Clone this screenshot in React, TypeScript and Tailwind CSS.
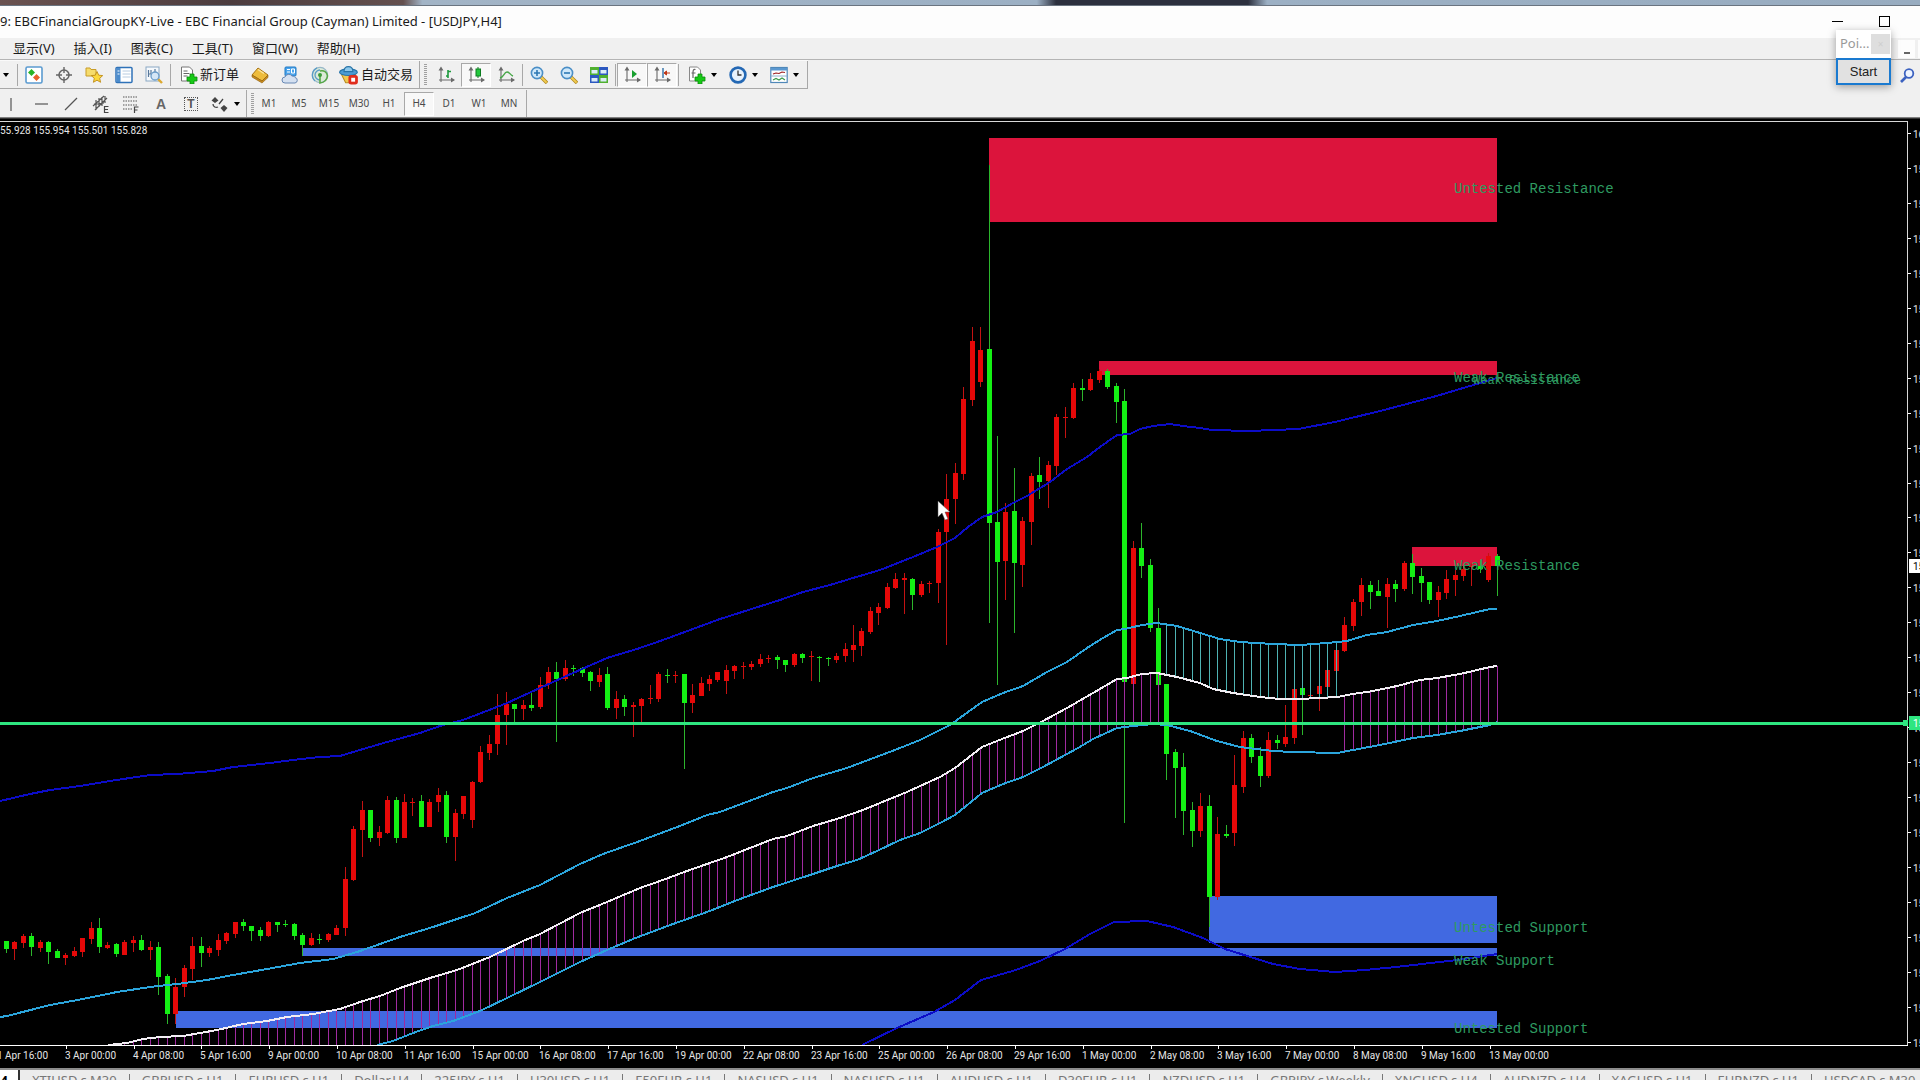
import type { ReactNode } from 'react';
import clsx from 'clsx';

type Point = [number, number];
// direction, high, body top, body bottom, low
type Candle = ['r' | 'g', number, number, number, number];

const STEP = 8.472;
const FIRST_X = 6.3;
const candleX = (i: number) => FIRST_X + (i - 1) * STEP;

const candles: Candle[] = [
  ['r', 940, 940, 964, 964], ['g', 941, 941, 949, 953], ['r', 941, 942, 949, 960], ['r', 934, 936, 943, 948],
  ['g', 933, 936, 947, 956], ['r', 940, 942, 948, 952], ['g', 941, 942, 952, 964], ['g', 949, 951, 958, 958],
  ['r', 953, 955, 958, 965], ['r', 947, 951, 956, 957], ['r', 938, 938, 952, 957], ['r', 922, 928, 939, 944],
  ['g', 918, 928, 947, 953], ['r', 942, 945, 948, 949], ['g', 943, 944, 954, 957], ['r', 940, 942, 955, 955],
  ['r', 936, 940, 943, 952], ['g', 935, 940, 950, 951], ['r', 941, 947, 950, 960], ['g', 942, 947, 977, 995],
  ['g', 974, 976, 1014, 1024], ['r', 978, 987, 1014, 1024], ['r', 965, 968, 987, 997], ['r', 937, 946, 969, 980],
  ['g', 937, 946, 953, 967], ['r', 946, 948, 953, 957], ['r', 934, 940, 950, 956], ['r', 932, 933, 941, 944],
  ['r', 922, 922, 934, 938], ['g', 919, 922, 926, 931], ['g', 926, 926, 931, 941], ['g', 927, 930, 936, 941],
  ['r', 921, 922, 936, 937], ['g', 922, 922, 925, 932], ['g', 920, 924, 925, 927], ['g', 923, 924, 936, 940],
  ['g', 933, 935, 945, 956], ['r', 933, 938, 945, 946], ['g', 934, 939, 940, 944], ['r', 933, 934, 940, 942],
  ['r', 925, 928, 935, 935], ['r', 867, 879, 928, 936], ['r', 826, 829, 880, 881], ['r', 801, 810, 830, 857],
  ['g', 810, 810, 838, 842], ['r', 826, 832, 838, 846], ['r', 796, 800, 833, 834], ['g', 797, 800, 838, 843],
  ['r', 794, 802, 838, 838], ['r', 798, 802, 803, 816], ['g', 795, 801, 827, 827], ['r', 799, 802, 827, 827],
  ['r', 788, 795, 802, 812], ['g', 791, 795, 837, 843], ['r', 809, 813, 837, 861], ['r', 796, 796, 814, 819],
  ['r', 781, 782, 820, 828], ['r', 746, 752, 782, 783], ['r', 735, 744, 753, 760], ['r', 694, 715, 744, 755],
  ['r', 692, 704, 715, 745], ['g', 704, 704, 709, 722], ['r', 700, 705, 709, 720], ['g', 693, 705, 708, 711],
  ['r', 677, 685, 707, 709], ['r', 667, 672, 684, 689], ['g', 662, 672, 679, 742], ['r', 660, 668, 679, 681],
  ['g', 665, 668, 669, 676], ['g', 667, 668, 673, 677], ['g', 671, 672, 681, 691], ['r', 668, 675, 682, 687],
  ['g', 667, 674, 708, 710], ['r', 691, 699, 708, 719], ['g', 695, 699, 707, 716], ['r', 702, 705, 707, 737],
  ['r', 698, 699, 706, 722], ['r', 685, 698, 699, 704], ['r', 672, 674, 699, 702], ['g', 669, 675, 676, 683],
  ['r', 671, 675, 676, 683], ['g', 674, 674, 703, 769], ['r', 684, 695, 703, 713], ['r', 677, 683, 696, 696],
  ['r', 675, 679, 684, 691], ['r', 672, 672, 680, 682], ['r', 665, 670, 681, 694], ['r', 665, 666, 671, 679],
  ['r', 662, 666, 667, 679], ['r', 661, 664, 667, 670], ['r', 654, 659, 664, 667], ['r', 655, 658, 659, 663],
  ['g', 655, 657, 660, 669], ['g', 660, 660, 665, 672], ['r', 653, 654, 665, 667], ['g', 653, 654, 658, 663],
  ['r', 651, 656, 657, 681], ['g', 656, 657, 658, 682], ['g', 657, 658, 659, 666], ['r', 653, 656, 660, 663],
  ['r', 643, 649, 656, 662], ['r', 625, 645, 650, 662], ['r', 628, 631, 646, 656], ['r', 607, 611, 632, 634],
  ['r', 603, 607, 613, 625], ['r', 583, 587, 608, 609], ['r', 573, 579, 588, 589], ['r', 573, 578, 580, 614],
  ['g', 578, 579, 595, 610], ['r', 581, 584, 595, 597], ['r', 581, 583, 584, 593], ['r', 529, 532, 583, 603],
  ['r', 474, 499, 532, 645], ['r', 463, 473, 499, 524], ['r', 387, 399, 474, 480], ['r', 327, 341, 400, 406],
  ['r', 327, 350, 382, 387], ['g', 165, 349, 523, 623], ['g', 436, 522, 562, 685], ['r', 503, 512, 561, 600],
  ['g', 468, 511, 563, 633], ['r', 517, 521, 565, 587], ['r', 473, 476, 522, 545], ['g', 457, 475, 482, 499],
  ['r', 461, 465, 481, 508], ['r', 414, 417, 466, 475], ['r', 407, 417, 418, 438], ['r', 383, 388, 418, 419],
  ['g', 379, 388, 390, 401], ['r', 373, 379, 390, 391], ['r', 369, 371, 380, 383], ['g', 369, 371, 387, 389],
  ['g', 383, 386, 402, 423], ['g', 389, 401, 682, 823], ['r', 541, 548, 684, 684], ['g', 523, 548, 566, 578],
  ['g', 559, 565, 628, 632], ['g', 608, 628, 685, 685], ['g', 684, 684, 754, 780], ['g', 749, 752, 768, 818],
  ['g', 753, 767, 811, 835], ['g', 802, 810, 831, 847], ['r', 793, 806, 831, 837], ['g', 795, 806, 897, 927],
  ['r', 817, 834, 897, 900], ['g', 825, 834, 836, 838], ['r', 755, 785, 833, 846], ['r', 731, 738, 787, 793],
  ['g', 734, 738, 757, 763], ['g', 747, 756, 776, 787], ['r', 732, 740, 776, 778], ['g', 735, 740, 743, 749],
  ['r', 705, 737, 744, 747], ['r', 688, 689, 738, 744], ['g', 687, 688, 695, 735], ['r', 690, 695, 696, 697],
  ['r', 683, 686, 694, 711], ['r', 669, 670, 687, 688], ['r', 650, 650, 671, 671], ['r', 617, 625, 651, 652],
  ['r', 599, 602, 626, 631], ['r', 578, 585, 602, 616], ['g', 581, 585, 592, 609], ['g', 580, 591, 596, 596],
  ['r', 578, 584, 597, 628], ['g', 580, 584, 589, 602], ['r', 561, 563, 589, 591], ['g', 554, 563, 577, 594],
  ['g', 568, 576, 583, 602], ['g', 582, 582, 600, 604], ['r', 586, 592, 600, 617], ['r', 570, 579, 593, 599],
  ['r', 570, 575, 580, 596], ['r', 565, 569, 576, 581], ['r', 563, 566, 567, 586], ['g', 560, 566, 569, 573],
  ['r', 553, 556, 580, 582], ['g', 554, 556, 566, 596],
];

const outerUpper: Point[] = [
  [0, 801], [30, 794], [50, 790], [80, 786], [110, 781], [150, 775], [177, 774], [213, 771], [233, 767], [270, 763],
  [293, 760], [320, 757], [340, 756], [353, 752], [387, 742], [420, 733], [443, 725], [463, 720], [497, 707],
  [507, 703], [540, 688], [573, 673], [607, 658], [637, 649], [663, 640], [720, 619], [780, 600], [803, 592],
  [830, 585], [853, 578], [880, 570], [913, 557], [937, 547], [955, 538], [968, 527], [982, 517], [997, 512],
  [1013, 503], [1027, 496], [1050, 482], [1067, 469], [1087, 457], [1100, 447], [1117, 435], [1130, 434],
  [1140, 429], [1153, 426], [1170, 424], [1183, 426], [1200, 428], [1212, 430], [1249, 431], [1298, 429],
  [1335, 422], [1384, 410], [1433, 397], [1497, 378],
];

const innerUpper: Point[] = [
  [0, 1017], [7, 1016], [50, 1005], [83, 999], [117, 992], [150, 987], [177, 984], [207, 980], [233, 975],
  [267, 969], [300, 963], [333, 959], [347, 955], [360, 951], [400, 937], [433, 927], [463, 917], [473, 914],
  [507, 898], [540, 885], [580, 864], [603, 854], [640, 841], [680, 826], [707, 815], [720, 812], [773, 792],
  [787, 788], [813, 778], [847, 768], [900, 748], [920, 740], [950, 725], [982, 702], [1003, 693], [1023, 686],
  [1047, 672], [1067, 662], [1087, 648], [1103, 638], [1117, 630], [1125, 629], [1142, 625], [1157, 623],
  [1177, 626], [1200, 633], [1220, 639], [1240, 642], [1273, 644], [1300, 645], [1327, 643], [1347, 641],
  [1367, 635], [1387, 632], [1413, 625], [1437, 621], [1460, 616], [1490, 609], [1497, 609],
];

const middle: Point[] = [
  [108, 1045], [127, 1043], [143, 1039], [160, 1037], [183, 1036], [200, 1033], [217, 1030], [243, 1024],
  [267, 1021], [287, 1017], [313, 1014], [340, 1009], [360, 1002], [380, 996], [400, 988], [430, 978], [457, 970],
  [490, 957], [523, 941], [540, 934], [580, 913], [607, 902], [640, 888], [660, 881], [687, 871], [727, 857],
  [773, 839], [787, 836], [813, 826], [840, 818], [863, 810], [880, 803], [907, 792], [940, 777], [955, 768],
  [982, 747], [1002, 739], [1023, 731], [1043, 721], [1067, 708], [1093, 693], [1117, 679], [1127, 678],
  [1142, 674], [1157, 673], [1167, 675], [1177, 677], [1200, 683], [1213, 689], [1233, 693], [1260, 697],
  [1280, 699], [1300, 699], [1337, 697], [1353, 694], [1373, 691], [1397, 686], [1420, 680], [1437, 678],
  [1460, 674], [1490, 667], [1497, 666],
];

const innerLower: Point[] = [
  [377, 1045], [393, 1041], [413, 1033], [433, 1026], [453, 1021], [480, 1011], [507, 998], [540, 982], [580, 962],
  [607, 950], [633, 939], [673, 924], [707, 912], [740, 899], [773, 887], [807, 876], [840, 865], [857, 860],
  [877, 851], [900, 840], [920, 833], [940, 823], [955, 815], [982, 793], [1003, 784], [1023, 777], [1043, 767],
  [1078, 748], [1093, 739], [1117, 728], [1133, 726], [1153, 724], [1167, 725], [1190, 731], [1217, 741],
  [1240, 747], [1273, 751], [1293, 752], [1337, 753], [1353, 750], [1380, 745], [1413, 738], [1437, 735],
  [1460, 731], [1490, 725], [1497, 722],
];

const outerLower: Point[] = [
  [862, 1045], [897, 1028], [934, 1012], [955, 1000], [981, 980], [1016, 970], [1040, 961], [1065, 949], [1090, 934],
  [1114, 922], [1147, 921], [1173, 927], [1203, 938], [1225, 949], [1273, 964], [1300, 969], [1335, 972],
  [1365, 970], [1396, 967], [1457, 960], [1497, 954],
];

const zones = [
  { x: 989, y: 138, h: 84, fill: '#dc143c' },
  { x: 1099, y: 361, h: 14, fill: '#dc143c' },
  { x: 1412, y: 547, h: 19, fill: '#dc143c' },
  { x: 1209, y: 896, h: 47, fill: '#4169e1' },
  { x: 303, y: 948, h: 8, fill: '#4169e1' },
  { x: 176, y: 1011, h: 17, fill: '#4169e1' },
];

const zoneLabels = [
  { x: 1454, y: 193, size: 14, text: 'Untested Resistance' },
  { x: 1454, y: 382, size: 14, text: 'Weak Resistance' },
  { x: 1473, y: 384, size: 12, text: 'Weak Resistance' },
  { x: 1454, y: 570, size: 14, text: 'Weak Resistance' },
  { x: 1454, y: 932, size: 14, text: 'Untested Support' },
  { x: 1454, y: 965, size: 14, text: 'Weak Support' },
  { x: 1454, y: 1033, size: 14, text: 'Untested Support' },
];

const dates = [
  '1 Apr 16:00', '3 Apr 00:00', '4 Apr 08:00', '5 Apr 16:00', '9 Apr 00:00', '10 Apr 08:00', '11 Apr 16:00',
  '15 Apr 00:00', '16 Apr 08:00', '17 Apr 16:00', '19 Apr 00:00', '22 Apr 08:00', '23 Apr 16:00', '25 Apr 00:00',
  '26 Apr 08:00', '29 Apr 16:00', '1 May 00:00', '2 May 08:00', '3 May 16:00', '7 May 00:00', '8 May 08:00',
  '9 May 16:00', '13 May 00:00',
];

const menus = ['显示(V)', '插入(I)', '图表(C)', '工具(T)', '窗口(W)', '帮助(H)'];
const periods = ['M1', 'M5', 'M15', 'M30', 'H1', 'H4', 'D1', 'W1', 'MN'];
const chartTabs = [
  'XTIUSD.c,M30', 'GBPUSD.c,H1', 'EURUSD.c,H1', 'Dollar,H4', '225JPY.c,H1', 'U30USD.c,H1', 'E50EUR.c,H1',
  'NASUSD.c,H1', 'NASUSD.c,H1', 'AUDUSD.c,H1', 'D30EUR.c,H1', 'NZDUSD.c,H1', 'GBPJPY.c,Weekly', 'XNGUSD.c,H4',
  'AUDNZD.c,H4', 'XAGUSD.c,H1', 'EURNZD.c,H1', 'USDCAD.c,M30',
];

const toPath = (pts: Point[]) => pts.map((p) => p.join(',')).join(' ');

function valueAt(pts: Point[], x: number, fallback: number) {
  if (x < pts[0][0]) return fallback;
  for (let i = 1; i < pts.length; i++) {
    const [x0, y0] = pts[i - 1];
    const [x1, y1] = pts[i];
    if (x <= x1) return y0 + ((y1 - y0) * (x - x0)) / (x1 - x0);
  }
  return pts[pts.length - 1][1];
}

function Chart() {
  return (
    <svg viewBox="0 117 1920 951" className="block w-full h-auto bg-black" role="img" aria-label="USDJPY,H4">
      <g shapeRendering="crispEdges">
        <rect x="0" y="117" width="1920" height="1" fill="#808080" />
        <rect x="0" y="118" width="1920" height="1" fill="#333" />
        {zones.map((z) => (
          <rect key={z.y} x={z.x} y={z.y} width={1497 - z.x} height={z.h} fill={z.fill} />
        ))}
        {candles.map(([dir, high, top, bottom, low], i) => {
          const x = Math.round(candleX(i) - 0.5);
          return (
            <g key={i}>
              <rect x={x} y={high} width="1" height={Math.max(low - high, 1)} fill={dir === 'r' ? '#c41212' : '#2cb52c'} />
              <rect x={x - 2} y={top} width="5" height={Math.max(bottom - top, 1)} fill={dir === 'r' ? '#e60808' : '#14f014'} />
            </g>
          );
        })}
        {candles.map((_, i) => {
          const x = candleX(i);
          if (x < 120) return null;
          const bearish = i >= 138 && i <= 158;
          const mid = valueAt(middle, x, 1045);
          const y1 = bearish ? valueAt(innerUpper, x, 1045) : mid;
          const y2 = bearish ? mid : valueAt(innerLower, x, 1045);
          return (
            <rect key={i} x={Math.round(x - 0.5)} y={y1} width="1" height={y2 - y1} fill={bearish ? '#4fb3b3' : '#a02ba0'} />
          );
        })}
      </g>

      <g fill="none" strokeWidth="2" strokeLinejoin="round" shapeRendering="crispEdges">
        <polyline points={toPath(outerUpper)} stroke="#0c0cc8" />
        <polyline points={toPath(outerLower)} stroke="#0c0cc8" />
        <polyline points={toPath(innerUpper)} stroke="#2ba5dc" />
        <polyline points={toPath(innerLower)} stroke="#2ba5dc" />
        <polyline points={toPath(middle)} stroke="#f2eef4" />
      </g>

      <g shapeRendering="crispEdges">
        <rect x="0" y="722" width="1907" height="3" fill="#2ee680" />
        <rect x="0" y="121" width="1908" height="1" fill="#d8d8d8" />
        <rect x="1907" y="121" width="1" height="925" fill="#d8d8d8" />
        <rect x="0" y="1045" width="1908" height="1" fill="#ffffff" />
        {dates.map((d, i) => (
          <rect key={d} x={Math.round(-2 + i * 67.8)} y="1046" width="1" height="3" fill="#ffffff" />
        ))}
        {Array.from({ length: 27 }, (_, i) => (
          <rect key={i} x="1908" y={Math.round(133 + i * 34.95)} width="3" height="1" fill="#ffffff" />
        ))}
      </g>

      <g fill="#2e9b60" className="font-['Liberation_Mono',monospace]">
        {zoneLabels.map((l) => (
          <text key={l.y} x={l.x} y={l.y} fontSize={l.size}>{l.text}</text>
        ))}
      </g>

      <g fill="#e6e6e6" fontSize="10" className="font-[Roboto,sans-serif]">
        <text x="0" y="134">55.928 155.954 155.501 155.828</text>
        {dates.map((d, i) => (
          <text key={d} x={Math.round(-3 + i * 67.8)} y="1059">{d}</text>
        ))}
        {Array.from({ length: 27 }, (_, i) => (
          <text key={i} x="1913" y={Math.round(138 + i * 34.95)}>{i === 0 ? '16' : '15'}</text>
        ))}
        <rect x="1909" y="559" width="11" height="14" fill="#ffffff" />
        <text x="1913" y="570" fill="#000000">15</text>
        <rect x="1903" y="720" width="5" height="6" fill="#2ee680" />
        <rect x="1909" y="716" width="11" height="14" fill="#2ee680" />
        <text x="1913" y="727" fill="#ffffff">15</text>
      </g>

      <path d="M938 501v16l4-4 3 7 3-1-3-7h5z" fill="#ffffff" stroke="#555" strokeWidth="0.5" />
    </svg>
  );
}

function Icon({ children, size = 18 }: { children: ReactNode; size?: number }) {
  return (
    <svg width={size} height={size} viewBox="0 0 18 18" fill="none" className="shrink-0" aria-hidden="true">
      {children}
    </svg>
  );
}

function ToolButton({ label, pressed, children }: { label: string; pressed?: boolean; children: ReactNode }) {
  return (
    <button
      aria-label={label}
      className={clsx(
        'flex h-6 w-[30px] shrink-0 items-center justify-center px-0.5',
        pressed && 'border border-[#a8a8a8] border-r-white border-b-white bg-[#f8f8f8]',
      )}
    >
      {children}
    </button>
  );
}

const Divider = () => <span className="mx-px h-[22px] w-px shrink-0 bg-[#a8a8a8]" />;

const Grip = () => (
  <span className="mx-1 h-[22px] w-[3px] shrink-0 bg-[repeating-linear-gradient(#a0a0a0_0_1px,#f0f0f0_1px_2px)]" />
);

const Caret = () => (
  <svg width="6" height="4" viewBox="0 0 6 4" className="shrink-0" aria-hidden="true">
    <path d="M0 0h6L3 4z" fill="#000" />
  </svg>
);

const Axes = () => <path d="M4 3v13M2 14h14M4 1.500 2.500 4h3zM17 14l-2.500-1.500v3z" stroke="#6a6a6a" strokeWidth="1.1" fill="#6a6a6a" />;

const PlusBadge = () => <path d="M10 8h4v3h3v4h-3v3h-4v-3H7v-4h3z" fill="#16c916" stroke="#0a8a0a" strokeWidth=".8" />;

const Magnifier = ({ plus }: { plus?: boolean }) => (
  <Icon>
    <path d="m11 11 6 6" stroke="#b08820" strokeWidth="3.4" />
    <path d="m11 11 5.6 5.6" stroke="#f2cc50" strokeWidth="2" />
    <circle cx="7" cy="7" r="5.6" fill="#cfe8fa" stroke="#4a8ec6" strokeWidth="1.6" />
    <path d={plus ? 'M4 7h6M7 4v6' : 'M4 7h6'} stroke="#2d78b4" strokeWidth="1.6" />
  </Icon>
);

function MainToolbar() {
  return (
    <div className="flex h-[29px] items-center border-t border-[#fafafa]">
      <div className="flex h-full items-center border-r border-b border-[#a8a8a8] pr-1">
        <button aria-label="新图表" className="flex w-4 justify-center pr-1"><Caret /></button>
        <Divider />
        <ToolButton label="市场报价">
          <Icon>
            <rect x="1" y="1" width="16" height="16" rx="1.5" fill="#fff" stroke="#5b9bd0" strokeWidth="1.6" />
            <path d="m6.5 3 3.500 3.500-3.500 3.500L3 6.500z" fill="#28b428" />
            <path d="m11.500 8 3.500 3.500-3.500 3.500L8 11.500z" fill="#e8622c" />
          </Icon>
        </ToolButton>
        <ToolButton label="十字准线">
          <Icon>
            <circle cx="9" cy="9" r="5" stroke="#666" strokeWidth="1.5" />
            <path d="M9 1v6M9 11v6M1 9h6M11 9h6" stroke="#666" strokeWidth="1.4" />
          </Icon>
        </ToolButton>
        <ToolButton label="导航">
          <Icon>
            <path d="M1 2h4l1 1.500h5V10H1z" fill="#f6dc6c" stroke="#c89c28" />
            <path d="m12 5.500 1.700 3.700 4 .400-3 2.700.900 4-3.600-2.100-3.600 2.100.900-4-3-2.700 4-.400z" fill="#fbd83c" stroke="#c08c18" strokeWidth=".9" />
          </Icon>
        </ToolButton>
        <ToolButton label="终端">
          <Icon>
            <rect x="1" y="1.500" width="16" height="15" rx="1" fill="#fff" stroke="#2f72b8" strokeWidth="1.5" />
            <path d="M1.500 2h4v14h-4z" fill="#4c8ccc" />
            <path d="M7.500 5h8M7.500 8h8M7.500 11h8" stroke="#b8cce0" />
            <path d="M2.500 5h2M2.500 8h2" stroke="#fff" />
          </Icon>
        </ToolButton>
        <ToolButton label="策略测试">
          <Icon>
            <rect x="1" y="1" width="13" height="14" fill="#f6f9fc" stroke="#8aa8c4" />
            <path d="M3.500 4v7M3.500 8H6V4M10 3v4" stroke="#58789a" strokeWidth="1.2" />
            <path d="m13 13 4 4" stroke="#dca830" strokeWidth="2.400" />
            <circle cx="10" cy="10" r="4" fill="#cfe4f6" fillOpacity=".85" stroke="#6a9cc8" strokeWidth="1.300" />
          </Icon>
        </ToolButton>
        <Divider />
        <button className="flex h-6 w-[73px] items-center gap-0.5 pl-2 text-[13px] leading-none whitespace-nowrap">
          <Icon>
            <path d="M1.500 1h8l3 3v11h-11z" fill="#fff" stroke="#777" />
            <path d="M3.500 5h4M3.500 7.500h6M3.500 10h4" stroke="#666" />
            <PlusBadge />
          </Icon>
          新订单
        </button>
        <ToolButton label="MetaEditor">
          <Icon>
            <path d="m7 2 10 7-6 6L1 9z" fill="#eebc3c" stroke="#a87414" />
            <path d="m1 9 10 6 6-6v2.500L11 17 1 11z" fill="#c98c1c" stroke="#8f5f10" strokeWidth=".6" />
            <path d="m7 3.500 6 4" stroke="#fbe49a" strokeWidth="1.500" />
          </Icon>
        </ToolButton>
        <ToolButton label="MQL5 云">
          <Icon>
            <rect x="4" y="1" width="11" height="9" rx="1" fill="#4aa4ec" stroke="#1f78c4" />
            <path d="M6 3.500h3M6 6h3M10.500 3h3v4h-3z" stroke="#fff" />
            <path d="M4 17a3 3 0 0 1 0-6 4 4 0 0 1 7-1 3 3 0 0 1 3 1.500 2.800 2.800 0 0 1 0 5.500z" fill="#d4e0f0" stroke="#6888b4" />
          </Icon>
        </ToolButton>
        <ToolButton label="信号">
          <Icon>
            <circle cx="9" cy="9" r="7.600" fill="#dcead8" stroke="#98b8c8" strokeWidth="1.200" />
            <path d="M9 4a5 5 0 1 0 0 10M6 1.800A8 8 0 0 0 4 15" stroke="#5a9cc8" strokeWidth="1.300" />
            <path d="M9 9v8c4-.500 7-3 7.500-7C16 6 13 4 9 5" stroke="#58a848" strokeWidth="1.600" />
            <circle cx="9" cy="9" r="2" fill="#3c9c3c" />
          </Icon>
        </ToolButton>
        <button className="flex h-6 w-20 items-center gap-0.5 pl-1 text-[13px] leading-none whitespace-nowrap">
          <Icon size={20}>
            <path d="M2 8h13l-3 8H6z" fill="#f0c850" stroke="#b88c20" />
            <ellipse cx="8.500" cy="6.500" rx="8" ry="3" fill="#4c9cd4" stroke="#2874a8" />
            <path d="M4.500 6c0-6 8-6 8 0z" fill="#8cc8ec" stroke="#2874a8" />
            <rect x="8.500" y="9" width="8.500" height="8.500" rx="2.500" fill="#e02c1c" />
            <rect x="11" y="11.500" width="3.500" height="3.500" fill="#fff" />
          </Icon>
          自动交易
        </button>
      </div>
      <div className="flex h-full items-center border-r border-b border-[#a8a8a8] pr-1">
        <Grip />
        <ToolButton label="柱状图">
          <Icon><Axes /><path d="M11 4v8M9 10h2M11 5.500h3" stroke="#1c9a3c" strokeWidth="1.600" /></Icon>
        </ToolButton>
        <ToolButton label="蜡烛图" pressed>
          <Icon><Axes /><path d="M11 1v11" stroke="#0c7c20" /><rect x="9" y="3" width="4.500" height="7" fill="#22c83c" stroke="#0c7c20" /></Icon>
        </ToolButton>
        <ToolButton label="折线图">
          <Icon><Axes /><path d="M3 12c4-1 4-6 7-6s3 3 6 4" stroke="#4aa84a" strokeWidth="1.400" /></Icon>
        </ToolButton>
        <Divider />
        <ToolButton label="放大"><Magnifier plus /></ToolButton>
        <ToolButton label="缩小"><Magnifier /></ToolButton>
        <ToolButton label="平铺窗口">
          <Icon>
            <path d="M0 1h9v8H0z" fill="#50b030" />
            <path d="M9 1h9v8H9z" fill="#2c58c0" />
            <path d="M0 9h9v8H0z" fill="#2c58c0" />
            <path d="M9 9h9v8H9z" fill="#50b030" />
            <path d="M1.500 4h6v3.500h-6zM10.500 4h6v3.500h-6zM1.500 12h6v3.500h-6zM10.500 12h6v3.500h-6z" fill="#dcecf8" />
          </Icon>
        </ToolButton>
        <Divider />
        <ToolButton label="自动滚动" pressed>
          <Icon><Axes /><path d="M9 4v8l5-4z" fill="#18a030" /></Icon>
        </ToolButton>
        <ToolButton label="图表平移" pressed>
          <Icon><Axes /><path d="M10 2v10" stroke="#3070a8" strokeWidth="1.400" /><path d="M17 7h-4M13.500 5 11 7l2.500 2z" stroke="#c03818" fill="#c03818" /></Icon>
        </ToolButton>
        <Divider />
        <button aria-label="指标" className="flex h-6 w-[41px] items-center justify-between pr-1 pl-2">
          <Icon>
            <path d="M1.500 1h8l3 3v11h-11z" fill="#fff" stroke="#888" />
            <path d="M7.500 3.500C5 3 5 5 5 7v5M3.500 7h4" stroke="#666" strokeWidth="1.200" />
            <PlusBadge />
          </Icon>
          <Caret />
        </button>
        <button aria-label="时间周期" className="flex h-6 w-[41px] items-center justify-between pr-1 pl-2">
          <Icon>
            <circle cx="9" cy="9" r="7.400" fill="#e8f2fc" stroke="#2468b4" strokeWidth="2.600" />
            <path d="M9 4.500V9h3.500" stroke="#333" strokeWidth="1.300" />
          </Icon>
          <Caret />
        </button>
        <button aria-label="模板" className="flex h-6 w-[41px] items-center justify-between pr-1 pl-2">
          <Icon>
            <rect x=".800" y="1.500" width="16.400" height="15" fill="#fff" stroke="#5088b8" strokeWidth="1.200" />
            <path d="M1 2h16v2.500H1z" fill="#5a98d0" />
            <path d="m3 8 3-1 3 .500 3-1.500 3 .500" stroke="#a02020" strokeWidth="1.200" />
            <path d="M1 10h16" stroke="#90b0cc" />
            <path d="m3 14 3-1.500 3 1.500 3-2 3 2" stroke="#3c9c4c" strokeWidth="1.200" />
          </Icon>
          <Caret />
        </button>
      </div>
    </div>
  );
}

function DrawingToolbar() {
  return (
    <div className="flex h-7 items-center pt-px">
      <div className="flex h-full items-center border-r border-[#a8a8a8] pr-1.5">
        <span className="-ml-1 flex items-center">
          <ToolButton label="垂直线"><Icon><path d="M9 3v13" stroke="#555" strokeWidth="1.200" /></Icon></ToolButton>
          <ToolButton label="水平线"><Icon><path d="M3 9h13" stroke="#555" strokeWidth="1.200" /></Icon></ToolButton>
          <ToolButton label="趋势线"><Icon><path d="M3 15 15 3" stroke="#555" strokeWidth="1.200" /></Icon></ToolButton>
          <ToolButton label="等距通道">
            <Icon>
              <path d="M1 11 12 1M3 15 15 3M4 5v10M7 3v9M10 2v9M13 1v7M2 9l10-1" stroke="#555" strokeWidth="1.200" />
              <path d="M16.500 11.500h-4v6h4M12.500 14.500h3.500" stroke="#444" strokeWidth="1.200" />
            </Icon>
          </ToolButton>
          <ToolButton label="斐波纳契">
            <Icon>
              <path d="M1 2h15M1 6h15M1 10h15M1 14h10" stroke="#555" strokeWidth="1.200" strokeDasharray="1.500 1" />
              <path d="M16.500 12h-4v6M12.500 15h3" stroke="#444" strokeWidth="1.200" />
            </Icon>
          </ToolButton>
          <ToolButton label="文字">
            <span className="font-['Liberation_Sans',sans-serif] text-sm font-bold text-[#666]">A</span>
          </ToolButton>
          <ToolButton label="文字标签">
            <span className="flex size-3.5 items-center justify-center border border-dotted border-[#555] font-['Liberation_Sans',sans-serif] text-xs font-bold text-[#555]">T</span>
          </ToolButton>
          <button aria-label="箭头" className="flex h-6 w-[34px] items-center justify-between pl-1">
            <Icon>
              <path d="m5 2 3.500 3.500L5 8 1.500 5.500zM14 10l3.500 3-3.500 4-3.500-4z" fill="#444" />
              <path d="M3 9c0 3 3 4 5 3M9 9l4-5" stroke="#444" strokeWidth="1.300" />
            </Icon>
            <Caret />
          </button>
        </span>
      </div>
      <div className="flex h-full items-center border-r border-[#a8a8a8] pr-0.5">
        <span className="-mr-1 flex"><Grip /></span>
        {periods.map((p) => (
          <ToolButton key={p} label={p} pressed={p === 'H4'}>
            <span className="font-['Noto_Sans',sans-serif] text-[10px] text-[#4a4a4a]">{p}</span>
          </ToolButton>
        ))}
      </div>
    </div>
  );
}

function PointerPopup() {
  return (
    <div className="absolute top-[30px] right-[29px] w-[55px] bg-white shadow-[0_2px_8px_rgba(0,0,0,0.35)]">
      <div className="flex h-7 items-center justify-between pr-px pl-1">
        <span className="text-[13px] text-[#999]">Poi...</span>
        <button aria-label="Close" className="h-5 w-[19px] bg-[#dedede] text-[10px] text-[#cfcfcf]">×</button>
      </div>
      <button className="h-[27px] w-full border-2 border-[#1a7ad0] bg-[#e1e1e1] font-['Liberation_Sans',sans-serif] text-[13px] text-[#222]">
        Start
      </button>
    </div>
  );
}

export default function App() {
  return (
    <div className="relative flex h-screen w-full flex-col overflow-hidden bg-[#f0f0f0] font-['Noto_Sans','Noto_Sans_CJK_SC',sans-serif] text-[#1a1a1a]">
      <div className="h-1.5 shrink-0 border-b border-[#6a7480] bg-[linear-gradient(90deg,#6a5250_0%,#4c3c3e_12%,#64504e_21%,#a2b4c6_22%,#9cb0c4_54%,#2c303e_55%,#2c303e_65%,#9cb0c4_66%,#98acc0_100%)]" />

      <header className="flex h-8 shrink-0 items-center justify-between bg-[#fdfdfd] pb-0.5">
        <h1 className="text-[13px] leading-6 whitespace-nowrap">
          9: EBCFinancialGroupKY-Live - EBC Financial Group (Cayman) Limited - [USDJPY,H4]
        </h1>
        <div className="flex items-center gap-9 pr-[30px]">
          <button aria-label="Minimize" className="flex size-[11px] items-center"><span className="h-px w-full bg-black" /></button>
          <button aria-label="Maximize" className="size-[11px] border border-black" />
        </div>
      </header>

      <nav className="flex h-[22px] shrink-0 items-start justify-between border-b border-[#b4b4b4]">
        <div className="flex gap-[19px] pl-[13px]">
          {menus.map((m) => (
            <button key={m} className="text-[13px] leading-5 whitespace-nowrap">{m}</button>
          ))}
        </div>
        <div className="flex gap-[3px] pt-0.5">
          <button aria-label="Minimize chart" className="flex h-[18px] w-[17px] items-end justify-center bg-[#fdfdfd] pb-1">
            <span className="h-0.5 w-1.5 bg-[#666]" />
          </button>
          <span className="h-[18px] w-0.5 bg-[#fdfdfd]" />
        </div>
      </nav>

      <div className="flex shrink-0 justify-between">
        <div>
          <MainToolbar />
          <DrawingToolbar />
        </div>
        <button aria-label="搜索" className="mt-[7px] mr-[5px] h-4">
          <svg width="15" height="15" viewBox="0 0 15 15" fill="none" aria-hidden="true">
            <circle cx="9" cy="5.500" r="4.300" fill="#eef4ff" stroke="#3c62c0" strokeWidth="1.800" />
            <path d="m6 9-5 5" stroke="#3c62c0" strokeWidth="2.600" />
          </svg>
        </button>
      </div>

      <main className="shrink-0">
        <Chart />
      </main>

      <footer className="flex h-8 shrink-0 items-start border-t-2 border-[#8c8c8c] bg-[#ececec]">
        <button className="flex h-8 w-5 shrink-0 justify-end border-r-2 border-[#333] bg-white pr-2.5 text-[13px] leading-5 font-bold text-black">
          H4
        </button>
        {chartTabs.map((t, i) => (
          <button key={i} className="flex shrink-0 items-center text-[13px] leading-5 whitespace-nowrap text-[#777]">
            <span className="px-3">{t}</span>
            <span className="h-3 w-px bg-[#777]" />
          </button>
        ))}
      </footer>

      <PointerPopup />
    </div>
  );
}
